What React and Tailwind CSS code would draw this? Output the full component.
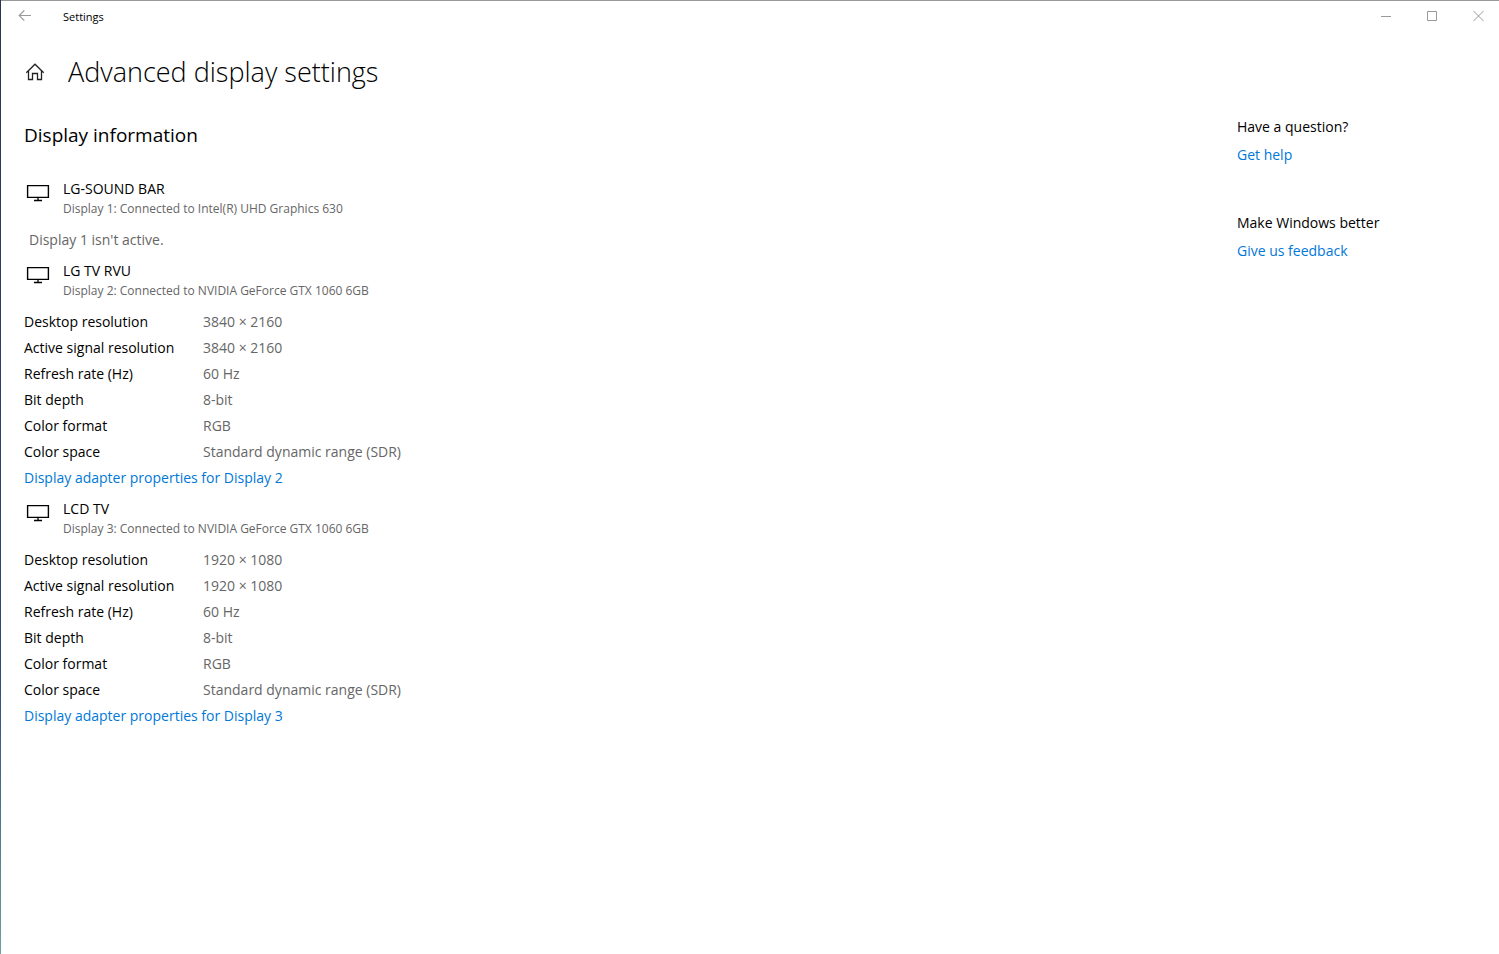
import React from 'react';

const displays = [
    {
        id: 1,
        name: 'LG-SOUND BAR',
        adapter: 'Intel(R) UHD Graphics 630',
        active: false
    },
    {
        id: 2,
        name: 'LG TV RVU',
        adapter: 'NVIDIA GeForce GTX 1060 6GB',
        active: true,
        resolution: '3840 × 2160'
    },
    {
        id: 3,
        name: 'LCD TV',
        adapter: 'NVIDIA GeForce GTX 1060 6GB',
        active: true,
        resolution: '1920 × 1080'
    }
];

const getRows = (display) => [
    ['Desktop resolution', display.resolution],
    ['Active signal resolution', display.resolution],
    ['Refresh rate (Hz)', '60 Hz'],
    ['Bit depth', '8-bit'],
    ['Color format', 'RGB'],
    ['Color space', 'Standard dynamic range (SDR)']
];

const BackIcon = () => (
    <svg width="14" height="12" viewBox="0 0 14 12" fill="none" stroke="currentColor" strokeWidth="1.1" aria-hidden="true">
        <path d="M13 5.5H1.2M6.3 .3L1.2 5.5L6.3 10.7" />
    </svg>
);

const HomeIcon = () => (
    <svg width="20" height="18" viewBox="0 0 20 18" fill="none" stroke="#222222" strokeWidth="1.3" aria-hidden="true">
        <path d="M1.3 9.8L10 1.2L18.7 9.8" />
        <path d="M3.5 8V16.5H7.5V10.5H12.5V16.5H16.5V8" />
    </svg>
);

const MonitorIcon = () => (
    <svg width="24" height="18" viewBox="0 0 24 18" fill="none" stroke="currentColor" aria-hidden="true">
        <path d="M1.6 1.6H22.4V13.4H1.6Z" strokeWidth="1.4" />
        <path d="M12 14V16.5M8 16.5H16" strokeWidth="1.3" />
    </svg>
);

const CaptionButton = ({ label, children }) => (
    <button type="button" aria-label={label} className="flex h-full w-[46px] items-center justify-center pl-1 hover:bg-gray-200">
        <svg width="11" height="11" viewBox="0 0 11 11" fill="none" stroke="currentColor" aria-hidden="true">
            {children}
        </svg>
    </button>
);

const TitleBar = () => (
    <header className="flex h-[31px] items-center text-[#999999]">
        <button type="button" aria-label="Back" className="flex h-full w-12 items-center justify-center pb-px hover:bg-gray-200">
            <BackIcon />
        </button>
        <span className="ml-[14px] text-[11px] text-black">Settings</span>
        <div className="ml-auto flex h-full">
            <CaptionButton label="Minimize">
                <path d="M0 5.5H10" />
            </CaptionButton>
            <CaptionButton label="Maximize">
                <path d="M.5 .5H9.5V9.5H.5Z" />
            </CaptionButton>
            <CaptionButton label="Close">
                <path d="M.5 0L10.5 10M10.5 0L.5 10" />
            </CaptionButton>
        </div>
    </header>
);

const DisplayInfo = ({ display }) => (
    <section>
        <div className="flex h-12 gap-[13px] pl-0.5">
            <div className="pt-[5px]">
                <MonitorIcon />
            </div>
            <div>
                <h3 className="leading-5">{display.name}</h3>
                <p className="text-xs leading-5 text-[#666666]">
                    Display {display.id}: Connected to {display.adapter}
                </p>
            </div>
        </div>
        {display.active ? (
            <>
                <table>
                    <tbody>
                        {getRows(display).map(([label, value]) => (
                            <tr key={label} className="h-[26px]">
                                <th scope="row" className="w-[179px] p-0 text-left font-normal">{label}</th>
                                <td className="p-0 text-[#666666]">{value}</td>
                            </tr>
                        ))}
                    </tbody>
                </table>
                <a href="#" className="block h-[34px] w-fit leading-[26px] text-[#0078d7]">
                    Display adapter properties for Display {display.id}
                </a>
            </>
        ) : (
            <p className="h-[34px] pl-[5px] leading-[26px] text-[#666666]">Display {display.id} isn't active.</p>
        )}
    </section>
);

const HelpLink = ({ title, link }) => (
    <section>
        <h2 className="leading-7">{title}</h2>
        <a href="#" className="leading-7 text-[#0078d7]">{link}</a>
    </section>
);

export default function App() {
    return (
        <div className="flex min-h-screen bg-white font-['Open_Sans',sans-serif] text-sm text-black">
            <div className="w-px bg-linear-to-b from-[#2b3350] via-[#2f4a78] via-70% to-[#6f9f9f]" />
            <div className="flex-1 border-t border-[#999999]">
                <TitleBar />
                <div className="flex items-center gap-[23px] pt-5 pl-6">
                    <a href="#" aria-label="Home">
                        <HomeIcon />
                    </a>
                    <h1 className="text-[27px] leading-10 font-light">Advanced display settings</h1>
                </div>
                <div className="flex justify-between pt-5 pl-[23px]">
                    <main>
                        <h2 className="mb-[21px] text-[19px] leading-[46px]">Display information</h2>
                        {displays.map((display) => (
                            <DisplayInfo key={display.id} display={display} />
                        ))}
                    </main>
                    <aside className="flex w-[262px] flex-col gap-10 pt-px">
                        <HelpLink title="Have a question?" link="Get help" />
                        <HelpLink title="Make Windows better" link="Give us feedback" />
                    </aside>
                </div>
            </div>
        </div>
    );
}
